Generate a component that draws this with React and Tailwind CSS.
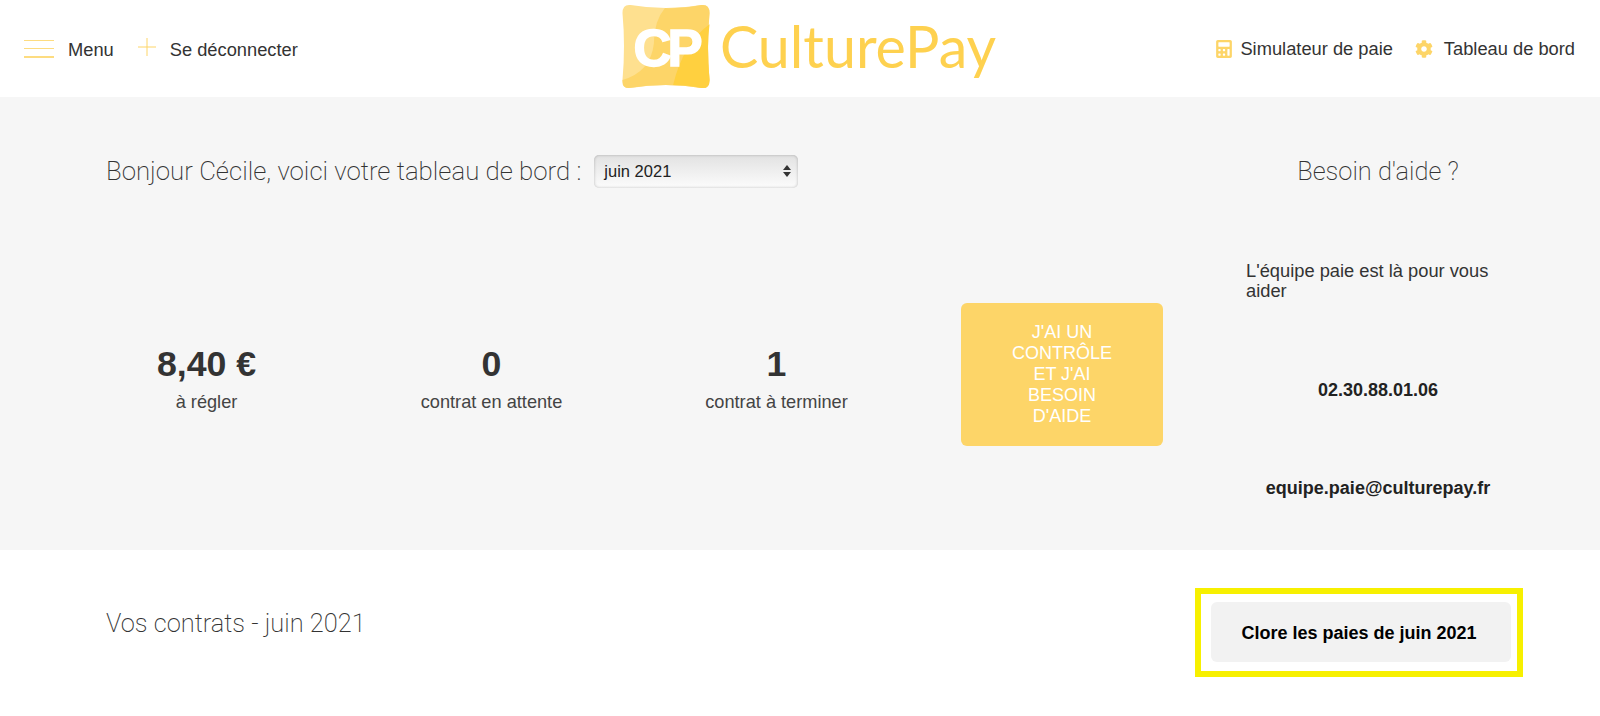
import React from 'react'
import { FaCalculator, FaCog } from 'react-icons/fa'

const LogoMark = () => (
  <svg width="88" height="85" viewBox="2 1 86 84" className="mb-[5px]">
    <path d="M10 2 Q45 8 80 2 Q88 1 88 10 Q85 43 88 76 Q88 85 80 84 Q45 78 10 84 Q2 85 2 76 Q5 43 2 10 Q2 1 10 2 Z" fill="#fee08f" />
    <path d="M44 5 Q62 6 80 2 Q88 1 88 10 Q85 43 88 76 Q88 85 80 84 Q45 78 8 84 Q2 84 2 78 L2 76 Q30 68 33 40 Q33 18 44 5 Z" fill="#fdd568" />
    <path d="M88 21 Q85 43 88 76 Q88 85 80 84 Q68 81 52 81 Q62 40 88 21 Z" fill="#ffd03f" />
    <text x="13" y="62" fontFamily="'Liberation Sans', sans-serif" fontWeight="700" fontSize="52" letterSpacing="-4" fill="#ffffff" stroke="#ffffff" strokeWidth="1.5">CP</text>
  </svg>
)

const Stat = ({ value, label }) => (
  <div className="w-[285px] flex flex-col items-center">
    <div className="text-[35.7px] leading-[38px] font-bold text-[#333]">{value}</div>
    <div className="mt-[9px] text-[18.2px] leading-[20px] text-[#444]">{label}</div>
  </div>
)

export default function App() {
  return (
    <div className="w-[1600px] h-[716px] bg-white overflow-hidden font-['Liberation_Sans',sans-serif] text-[#333]">
      {/* Header */}
      <header className="h-[97px] flex items-center justify-between pl-6 pr-[25px]">
        <div className="w-[500px] flex items-center text-[18.3px] text-[#333]">
          <div className="w-[30px] h-[18px] flex flex-col justify-between">
            <span className="block h-[1.5px] bg-[#fddc80]" />
            <span className="block h-[1.5px] bg-[#fddc80]" />
            <span className="block h-[1.5px] bg-[#fddc80]" />
          </div>
          <span className="ml-[14px] pt-[2px]">Menu</span>
          <svg className="ml-[24px] mb-1" width="18" height="18" viewBox="0 0 18 18">
            <path d="M9 0V18M0 9H18" stroke="#fdd568" strokeWidth="1" />
          </svg>
          <span className="ml-[14px] pt-[2px]">Se déconnecter</span>
        </div>
        <div className="flex items-center gap-[10px] ml-[19px]">
          <LogoMark />
          <span className="text-[#fed14f] text-[57.4px] leading-none font-['Lato',sans-serif] font-normal mb-[6px]">CulturePay</span>
        </div>
        <div className="w-[500px] flex items-center justify-end text-[18.3px] text-[#333]">
          <FaCalculator size={18} className="text-[#fdd568]" />
          <span className="ml-[7px]">Simulateur de paie</span>
          <FaCog size={18} className="ml-[22px] text-[#fdd568]" />
          <span className="ml-[11px]">Tableau de bord</span>
        </div>
      </header>

      {/* Tableau de bord */}
      <section className="h-[453px] bg-[#f6f6f6] flex pl-[64px]">
        <div className="w-[1182px]">
          <div className="pl-[42px] pt-[57px] flex items-center h-[91px]">
            <h1 className="text-[25.8px] font-['Roboto',sans-serif] font-extralight text-[#333]">Bonjour Cécile, voici votre tableau de bord :</h1>
            <div className="ml-[13px] w-[204px] h-[33px] rounded-[5px] bg-gradient-to-b from-[#e2e2e2] to-[#fcfcfc] shadow-[inset_0_0_3px_rgba(0,0,0,0.25)] flex items-center justify-between pl-[10px] pr-[7px] text-[16.5px] text-[#222]">
              <span>juin 2021</span>
              <span className="flex flex-col gap-[2px]">
                <span className="block w-0 h-0 border-x-[4px] border-x-transparent border-b-[5px] border-b-[#333]" />
                <span className="block w-0 h-0 border-x-[4px] border-x-transparent border-t-[5px] border-t-[#333]" />
              </span>
            </div>
          </div>
          <div className="flex items-start mt-[157px]">
            <div className="flex">
              <Stat value="8,40 €" label="à régler" />
              <Stat value="0" label="contrat en attente" />
              <Stat value="1" label="contrat à terminer" />
            </div>
            <button className="ml-[42px] -mt-[42px] w-[202px] h-[143px] rounded-[6px] bg-[#fdd568] text-white text-[18px] leading-[21px] px-[40px] text-center uppercase">
              J'ai un contrôle et j'ai besoin d'aide
            </button>
          </div>
        </div>
        <aside className="w-[264px] text-[18.3px] text-[#333]">
          <h2 className="pt-[57px] h-[91px] flex items-center justify-center text-[25.4px] font-['Roboto',sans-serif] font-extralight text-[#333]">Besoin d'aide ?</h2>
          <p className="mt-[73px] leading-[20px]">L'équipe paie est là pour vous aider</p>
          <p className="mt-[79px] font-bold text-center text-[18px] leading-[20px] text-[#222]">02.30.88.01.06</p>
          <p className="mt-[78px] font-bold text-center text-[18px] leading-[20px] text-[#222]">equipe.paie@culturepay.fr</p>
        </aside>
      </section>

      {/* Contrats */}
      <section className="flex items-start justify-between pl-[106px] pr-[77px]">
        <h2 className="mt-[59px] text-[25.4px] leading-[28px] font-['Roboto',sans-serif] font-extralight text-[#333]">Vos contrats - juin 2021</h2>
        <div className="mt-[38px] border-[6px] border-[#f7f000] pl-[10px] pr-[6px] pt-[8px] pb-[9px]">
          <button className="w-[300px] h-[60px] rounded-[6px] bg-[#f2f2f2] pt-[2px] pr-[4px] text-[18px] font-bold text-black">Clore les paies de juin 2021</button>
        </div>
      </section>
    </div>
  )
}
